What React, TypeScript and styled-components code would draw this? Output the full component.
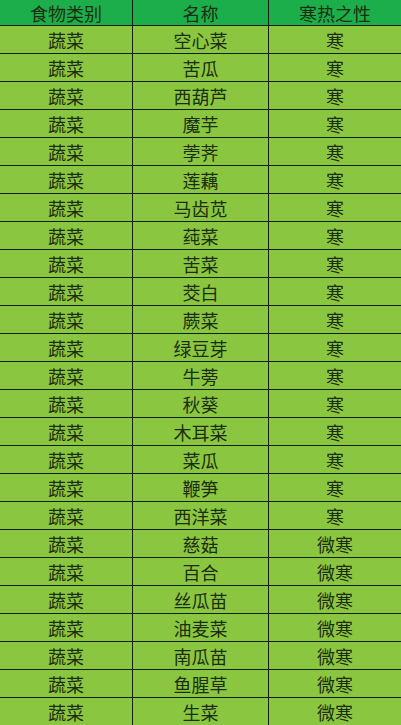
import React from 'react';
import styled, { createGlobalStyle } from 'styled-components';

const GlobalStyle = createGlobalStyle`
    html, body {
        margin: 0;
        padding: 0;
        background: #8bc640;
    }
    body {
        font-family: "Noto Sans CJK SC", "Liberation Sans", sans-serif;
    }
`;

const Sheet = styled.div`
    width: 401px;
    display: flex;
    flex-direction: column;
`;

const Row = styled.div<{ $head?: boolean }>`
    display: grid;
    grid-template-columns: 133px 136px 1fr;
    height: ${({ $head }) => ($head ? '26px' : '28px')};
    background: ${({ $head }) => ($head ? '#1bae4b' : '#8bc640')};
    border-bottom: 1px solid #10200a;
    box-sizing: border-box;
`;

const Cell = styled.div`
    display: flex;
    align-items: center;
    justify-content: center;
    border-right: 1px solid #10200a;
    font-size: 18px;
    line-height: 1;
    color: #1c2e12;

    &:last-child {
        border-right: none;
    }
`;

const rows: [string, string][] = [
    ['空心菜', '寒'],
    ['苦瓜', '寒'],
    ['西葫芦', '寒'],
    ['魔芋', '寒'],
    ['荸荠', '寒'],
    ['莲藕', '寒'],
    ['马齿苋', '寒'],
    ['莼菜', '寒'],
    ['苦菜', '寒'],
    ['茭白', '寒'],
    ['蕨菜', '寒'],
    ['绿豆芽', '寒'],
    ['牛蒡', '寒'],
    ['秋葵', '寒'],
    ['木耳菜', '寒'],
    ['菜瓜', '寒'],
    ['鞭笋', '寒'],
    ['西洋菜', '寒'],
    ['慈菇', '微寒'],
    ['百合', '微寒'],
    ['丝瓜苗', '微寒'],
    ['油麦菜', '微寒'],
    ['南瓜苗', '微寒'],
    ['鱼腥草', '微寒'],
    ['生菜', '微寒'],
];

export default function App() {
    return (
        <>
            <GlobalStyle />
            <Sheet>
                <Row $head>
                    <Cell>食物类别</Cell>
                    <Cell>名称</Cell>
                    <Cell>寒热之性</Cell>
                </Row>
                {rows.map(([name, nature]) => (
                    <Row key={name}>
                        <Cell>蔬菜</Cell>
                        <Cell>{name}</Cell>
                        <Cell>{nature}</Cell>
                    </Row>
                ))}
            </Sheet>
        </>
    );
}
